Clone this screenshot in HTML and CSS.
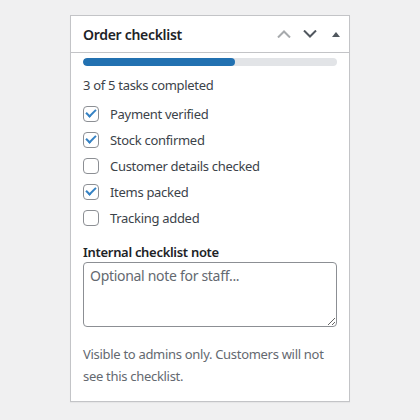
FILE: index.html
```html
<!DOCTYPE html>
<html lang="en">
<head>
<meta charset="UTF-8">
<title>Order checklist</title>
<link rel="stylesheet" href="styles.css">
</head>
<body>

<div class="postbox">
  <div class="postbox-header">
    <h2>Order checklist</h2>
    <div class="handle-actions">
      <button class="handle-btn disabled" aria-label="Move up">
        <svg width="14" height="8" viewBox="0 0 14 8"><path d="M1 7.5 L7 1.5 L13 7.5" fill="none" stroke="currentColor" stroke-width="2"/></svg>
      </button>
      <button class="handle-btn" aria-label="Move down">
        <svg width="14" height="8" viewBox="0 0 14 8"><path d="M1 0.5 L7 6.5 L13 0.5" fill="none" stroke="currentColor" stroke-width="2"/></svg>
      </button>
      <button class="handle-btn" aria-label="Toggle panel">
        <svg width="8" height="5" viewBox="0 0 8 5"><path d="M0 5 L4 0 L8 5 Z" fill="currentColor"/></svg>
      </button>
    </div>
  </div>

  <div class="inside">
    <div class="progress"><div class="progress-fill" style="width: 60%"></div></div>
    <p class="progress-text">3 of 5 tasks completed</p>

    <ul class="tasks">
      <li><label><input type="checkbox" checked> Payment verified</label></li>
      <li><label><input type="checkbox" checked> Stock confirmed</label></li>
      <li><label><input type="checkbox"> Customer details checked</label></li>
      <li><label><input type="checkbox" checked> Items packed</label></li>
      <li><label><input type="checkbox"> Tracking added</label></li>
    </ul>

    <label class="note-label" for="note">Internal checklist note</label>
    <textarea id="note" rows="3" placeholder="Optional note for staff..."></textarea>

    <p class="help">Visible to admins only. Customers will not see this checklist.</p>
  </div>
</div>

</body>
</html>
```

FILE: styles.css
```css
body {
  margin: 0;
  padding: 15px 70px;
  background: #f0f0f1;
  font-family: "Noto Sans", "Open Sans", sans-serif;
  font-size: 13px;
  letter-spacing: -0.3px;
  color: #3c434a;
}
.postbox {
  background: #fff;
  border: 1px solid #c3c4c7;
  box-shadow: 0 1px 1px rgba(0,0,0,0.04);
}
.postbox-header {
  display: flex;
  align-items: center;
  justify-content: space-between;
  height: 36px;
  border-bottom: 1px solid #c3c4c7;
}
.postbox-header h2 {
  margin: 0;
  padding: 0 12px;
  font-size: 14px;
  font-weight: 600;
  color: #1d2327;
}
.handle-actions {
  display: flex;
  height: 100%;
}
.handle-btn {
  width: 26px;
  height: 100%;
  border: none;
  background: none;
  padding: 0;
  display: flex;
  align-items: center;
  justify-content: center;
  color: #50575e;
  cursor: pointer;
}
.handle-btn.disabled {
  color: #a7aaad;
}
.inside {
  padding: 5px 12px 14px;
}
.progress {
  height: 8px;
  background: #e2e4e7;
  border-radius: 4px;
  overflow: hidden;
}
.progress-fill {
  height: 100%;
  background: #2271b1;
  border-radius: 4px;
}
.progress-text {
  margin: 9px 0 6px;
  line-height: 20px;
}
.tasks {
  list-style: none;
  margin: 0 0 11px;
  padding: 0;
}
.tasks li {
  height: 26px;
  display: flex;
  align-items: center;
}
.tasks label {
  display: flex;
  align-items: center;
  gap: 11px;
  line-height: 20px;
}
.tasks input[type="checkbox"] {
  appearance: none;
  width: 16px;
  height: 16px;
  margin: 0;
  border: 1px solid #8c8f94;
  border-radius: 4px;
  background: #fff;
  display: flex;
  align-items: center;
  justify-content: center;
}
.tasks input[type="checkbox"]:checked::before {
  content: "";
  width: 8px;
  height: 4px;
  border-left: 2px solid #3582c4;
  border-bottom: 2px solid #3582c4;
  transform: translateY(-2px) rotate(-45deg);
}
.note-label {
  display: block;
  font-weight: 600;
  color: #1d2327;
  line-height: 20px;
  margin-bottom: 0;
}
textarea {
  display: block;
  box-sizing: border-box;
  width: 100%;
  height: 65px;
  padding: 2px 6px;
  border: 1px solid #8c8f94;
  border-radius: 4px;
  font-family: inherit;
  font-size: 14px;
  letter-spacing: -0.3px;
  line-height: 1.5;
  color: #2c3338;
}
textarea::placeholder {
  color: #646970;
}
.help {
  margin: 16px 0 0;
  line-height: 22px;
  color: #646970;
}
```
